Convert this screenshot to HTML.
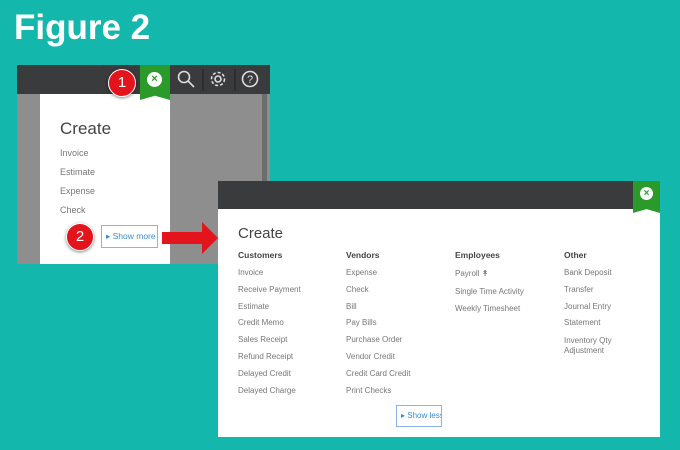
<!DOCTYPE html>
<html><head><style>
body{margin:0;width:680px;height:450px;background:#13b7ac;position:relative;overflow:hidden;font-family:"Liberation Sans",sans-serif}
.a{position:absolute}
.t{color:#777;font-size:8px;white-space:nowrap}
.h{color:#444;font-size:8.5px;font-weight:bold}
.badge{position:absolute;width:26px;height:26px;border-radius:50%;background:#e3141b;color:#fff;font-size:15px;text-align:center;line-height:26px;box-shadow:0 1px 3px rgba(0,0,0,.5);border:1px solid #fff}
.btn{white-space:nowrap;overflow:hidden;background:#fff}
</style></head><body>
<div class="a" style="left:14px;top:8px;color:#fff;font-size:35px;font-weight:bold">Figure 2</div>

<div class="a" style="left:17px;top:65px;width:253px;height:29px;background:#3a3b3d"></div>
<div class="a" style="left:17px;top:94px;width:253px;height:170px;background:#8e8e8e"></div>
<div class="a" style="left:262px;top:94px;width:5px;height:170px;background:#6d6d6d"></div>
<div class="a" style="left:40px;top:94px;width:130px;height:170px;background:#fff"></div>
<div class="a" style="left:140px;top:65px;width:30px;height:35px;background:#2a9a2a;clip-path:polygon(0 0,100% 0,100% 100%,50% 88%,0 100%)"></div>
<div class="a" style="left:147px;top:72px;width:15px;height:15px;border-radius:50%;background:#fff;color:#2a9a2a;font-size:11px;font-weight:bold;text-align:center;line-height:15px">×</div>
<svg class="a" style="left:176px;top:69px" width="90" height="22"><g fill="none" stroke="#ddd" stroke-width="1.6"><circle cx="8" cy="8" r="5.5"/><path d="M12 12l6 6"/><circle cx="42" cy="10" r="3"/><circle cx="42" cy="10" r="6.5" stroke-dasharray="3 2"/><circle cx="74" cy="10" r="7.5"/></g><text x="74" y="14" fill="#ddd" font-size="11" text-anchor="middle" font-family="Liberation Sans">?</text><path d="M27 0v22M59 0v22" stroke="#222"/></svg>
<div class="badge" style="left:108px;top:69px">1</div>
<div class="a" style="left:60px;top:119px;font-size:17px;color:#444">Create</div>
<div class="a t" style="left:60px;top:148px;font-size:9px">Invoice</div>
<div class="a t" style="left:60px;top:167px;font-size:9px">Estimate</div>
<div class="a t" style="left:60px;top:186px;font-size:9px">Expense</div>
<div class="a t" style="left:60px;top:205px;font-size:9px">Check</div>
<div class="a btn" style="left:101px;top:225px;width:57px;height:23px;border:1px solid #8ab4e8;box-sizing:border-box;color:#3a8bd6;font-size:8.5px;line-height:21px;padding-left:4px">▸ Show more</div>
<div class="badge" style="left:66px;top:223px">2</div>
<svg class="a" style="left:160px;top:221px" width="60" height="34"><path d="M2 11h40V1l16 16-16 16V23H2z" fill="#e3141b"/></svg>

<div class="a" style="left:218px;top:181px;width:442px;height:28px;background:#3a3b3d"></div>
<div class="a" style="left:218px;top:209px;width:442px;height:228px;background:#fff"></div>
<div class="a" style="left:633px;top:181px;width:27px;height:32px;background:#2a9a2a;clip-path:polygon(0 0,100% 0,100% 100%,50% 88%,0 100%)"></div>
<div class="a" style="left:640px;top:187px;width:13px;height:13px;border-radius:50%;background:#fff;color:#2a9a2a;font-size:10px;font-weight:bold;text-align:center;line-height:13px">×</div>
<div class="a" style="left:238px;top:225px;font-size:15px;color:#444">Create</div>

<div class="a h" style="left:238px;top:250px">Customers</div>
<div class="a h" style="left:346px;top:250px">Vendors</div>
<div class="a h" style="left:455px;top:250px">Employees</div>
<div class="a h" style="left:564px;top:250px">Other</div>

<div class="a t" style="left:238px;top:265px;line-height:16.8px">Invoice<br>Receive Payment<br>Estimate<br>Credit Memo<br>Sales Receipt<br>Refund Receipt<br>Delayed Credit<br>Delayed Charge</div>
<div class="a t" style="left:346px;top:265px;line-height:16.8px">Expense<br>Check<br>Bill<br>Pay Bills<br>Purchase Order<br>Vendor Credit<br>Credit Card Credit<br>Print Checks</div>
<div class="a t" style="left:455px;top:265px;line-height:17.5px">Payroll <span style="color:#555">↟</span><br>Single Time Activity<br>Weekly Timesheet</div>
<div class="a t" style="left:564px;top:265px;line-height:16.8px">Bank Deposit<br>Transfer<br>Journal Entry<br>Statement</div>
<div class="a t" style="left:564px;top:336px;line-height:10px">Inventory Qty<br>Adjustment</div>
<div class="a btn" style="left:396px;top:405px;width:46px;height:22px;border:1px solid #8ab4e8;box-sizing:border-box;color:#3a8bd6;font-size:8px;line-height:20px;padding-left:4px">▸ Show less</div>
</body></html>
